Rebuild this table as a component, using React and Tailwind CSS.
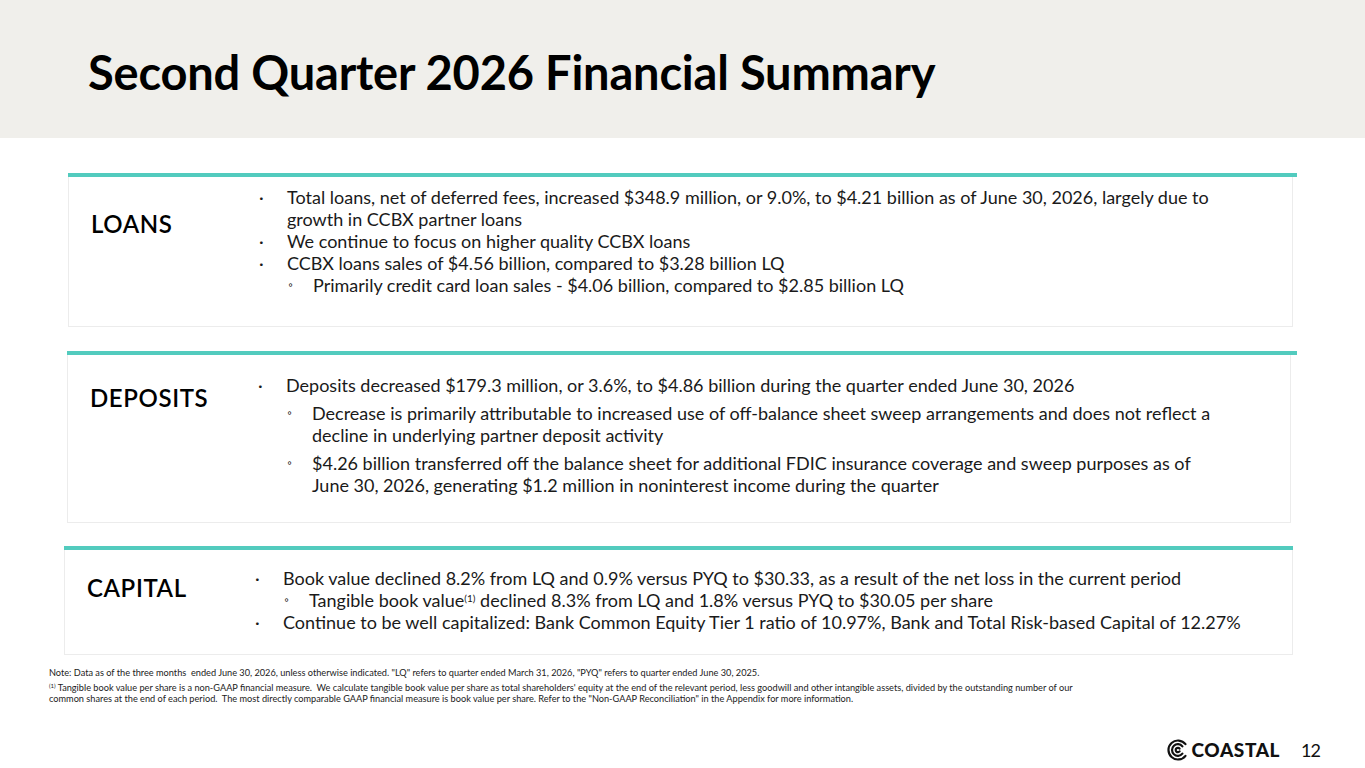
import React from 'react';

const font = { fontFamily: '"Lato", "Noto Sans", sans-serif' };

const Dot = ({ sub }) => (
    <span className={sub ? 'w-[25px] shrink-0 text-[12px] leading-[22px]' : 'w-[28px] shrink-0 leading-[22px]'}>
        {sub ? '◦' : '·'}
    </span>
);

const Item = ({ children, sub, className = '' }) => (
    <div className={`flex ${sub ? 'pl-[29px]' : ''} ${className}`}>
        <Dot sub={sub} />
        <div className="leading-[22px] whitespace-nowrap">{children}</div>
    </div>
);

const Section = ({ label, labelTop, wrap, bar, box, children }) => (
    <div className={wrap}>
        <div className={`h-[4px] bg-[#52cbbe] ${bar}`} />
        <div className={`flex border border-t-0 border-[#ececec] ${box}`}>
            <div className={`w-[190px] shrink-0 pl-[22px] text-[24px] leading-[36px] font-semibold text-black tracking-[0.6px] ${labelTop}`}>
                {label}
            </div>
            <div className="text-[18px] text-[#1a1a1a]">{children}</div>
        </div>
    </div>
);

const CoastalLogo = () => (
    <div className="flex items-center gap-[3px]">
        <svg width="22" height="22" viewBox="0 0 22 22" fill="none" stroke="#111" strokeWidth="2.2" strokeLinecap="round">
            <path d="M18.5 5.2A9.5 9.5 0 1 0 18.5 16.8" />
            <path d="M15.4 7.4A5.8 5.8 0 1 0 15.4 14.6" />
            <path d="M12.6 9.6A2.2 2.2 0 1 0 12.6 12.4" />
        </svg>
        <span className="text-[19px] font-black tracking-[0.6px] text-[#111]">COASTAL</span>
    </div>
);

export default function App() {
    return (
        <div className="relative w-full h-[768px] bg-white overflow-hidden" style={font}>
            <div className="h-[138px] bg-[#f0efeb] pl-[88px] pt-[40px]">
                <h1 className="text-[47px] font-bold text-black leading-[64px] tracking-[-0.2px]">Second Quarter 2026 Financial Summary</h1>
            </div>

            <Section
                label="LOANS"
                labelTop="pt-[20px]"
                wrap="mt-[35px] ml-[68px]"
                bar="w-[1229px]"
                box="w-[1225px] h-[150px] pt-[9px]"
            >
                <Item>Total loans, net of deferred fees, increased $348.9 million, or 9.0%, to $4.21 billion as of June 30, 2026, largely due to<br />growth in CCBX partner loans</Item>
                <Item>We continue to focus on higher quality CCBX loans</Item>
                <Item>CCBX loans sales of $4.56 billion, compared to $3.28 billion LQ</Item>
                <Item sub>Primarily credit card loan sales - $4.06 billion, compared to $2.85 billion LQ</Item>
            </Section>

            <Section
                label="DEPOSITS"
                labelTop="pt-[6px]"
                wrap="mt-[24px] ml-[67px]"
                bar="w-[1230px]"
                box="w-[1224px] h-[168px] pt-[19px]"
            >
                <Item>Deposits decreased $179.3 million, or 3.6%, to $4.86 billion during the quarter ended June 30, 2026</Item>
                <Item sub className="mt-[6px]">Decrease is primarily attributable to increased use of off-balance sheet sweep arrangements and does not reflect a<br />decline in underlying partner deposit activity</Item>
                <Item sub className="mt-[6px]">$4.26 billion transferred off the balance sheet for additional FDIC insurance coverage and sweep purposes as of<br />June 30, 2026, generating $1.2 million in noninterest income during the quarter</Item>
            </Section>

            <Section
                label="CAPITAL"
                labelTop="pt-[3px]"
                wrap="mt-[23px] ml-[64px]"
                bar="w-[1229px]"
                box="w-[1229px] h-[105px] pt-[17px]"
            >
                <Item>Book value declined 8.2% from LQ and 0.9% versus PYQ to $30.33, as a result of the net loss in the current period</Item>
                <Item sub>Tangible book value<sup className="text-[10px]">(1)</sup> declined 8.3% from LQ and 1.8% versus PYQ to $30.05 per share</Item>
                <Item>Continue to be well capitalized: Bank Common Equity Tier 1 ratio of 10.97%, Bank and Total Risk-based Capital of 12.27%</Item>
            </Section>

            <div className="ml-[49px] mt-[12px] text-[9.2px] leading-[11px] text-[#222]">
                <p className="mb-[4px]">Note: Data as of the three months&nbsp; ended June 30, 2026, unless otherwise indicated. "LQ" refers to quarter ended March 31, 2026, "PYQ" refers to quarter ended June 30, 2025.</p>
                <p>
                    <sup className="text-[6px]">(1)</sup> Tangible book value per share is a non-GAAP financial measure.&nbsp; We calculate tangible book value per share as total shareholders' equity at the end of the relevant period, less goodwill and other intangible assets, divided by the outstanding number of our<br />
                    common shares at the end of each period.&nbsp; The most directly comparable GAAP financial measure is book value per share. Refer to the "Non-GAAP Reconciliation" in the Appendix for more information.
                </p>
            </div>

            <div className="flex justify-end items-center gap-[21px] pr-[45px] mt-[32px]">
                <CoastalLogo />
                <span className="text-[18px] tracking-[-1px] text-[#111]">12</span>
            </div>
        </div>
    );
}
